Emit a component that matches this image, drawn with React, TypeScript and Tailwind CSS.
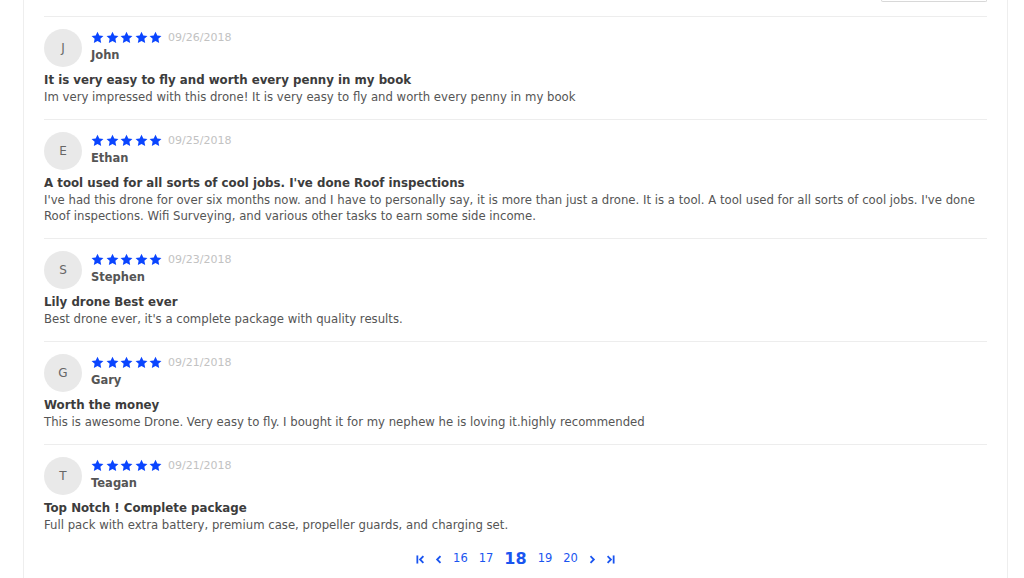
import React from "react";

type Review = {
  initial: string;
  name: string;
  date: string;
  title: string;
  body: string;
};

const REVIEWS: Review[] = [
  {
    initial: "J",
    name: "John",
    date: "09/26/2018",
    title: "It is very easy to fly and worth every penny in my book",
    body: "Im very impressed with this drone! It is very easy to fly and worth every penny in my book",
  },
  {
    initial: "E",
    name: "Ethan",
    date: "09/25/2018",
    title: "A tool used for all sorts of cool jobs. I've done Roof inspections",
    body: "I've had this drone for over six months now. and I have to personally say, it is more than just a drone. It is a tool. A tool used for all sorts of cool jobs. I've done Roof inspections. Wifi Surveying, and various other tasks to earn some side income.",
  },
  {
    initial: "S",
    name: "Stephen",
    date: "09/23/2018",
    title: "Lily drone Best ever",
    body: "Best drone ever, it's a complete package with quality results.",
  },
  {
    initial: "G",
    name: "Gary",
    date: "09/21/2018",
    title: "Worth the money",
    body: "This is awesome Drone. Very easy to fly. I bought it for my nephew he is loving it.highly recommended",
  },
  {
    initial: "T",
    name: "Teagan",
    date: "09/21/2018",
    title: "Top Notch ! Complete package",
    body: "Full pack with extra battery, premium case, propeller guards, and charging set.",
  },
];

function Star() {
  return (
    <svg width="13" height="13" viewBox="0 0 24 24" className="shrink-0">
      <path
        fill="#0a45ff"
        d="M12 1.2l3.3 7.1 7.7.9-5.7 5.3 1.5 7.6L12 18.3l-6.8 3.8 1.5-7.6L1 9.2l7.7-.9z"
      />
    </svg>
  );
}

function ReviewItem({ r }: { r: Review }) {
  return (
    <div className="border-t border-[#ededed] pt-3 pb-[14px]">
      <div className="flex items-start">
        <div className="flex h-[38px] w-[38px] shrink-0 items-center justify-center rounded-full bg-[#e9e9e9] text-[12px] text-[#666]">
          {r.initial}
        </div>
        <div className="ml-[9px] flex flex-col">
          <div className="flex h-[17px] items-center">
            <div className="flex gap-[1.5px]">
              <Star />
              <Star />
              <Star />
              <Star />
              <Star />
            </div>
            <span className="ml-[6px] text-[11px] leading-none text-[#c2c2c2]">{r.date}</span>
          </div>
          <div className="mt-[1px] text-[11.5px] font-bold leading-[16px] text-[#555]">{r.name}</div>
        </div>
      </div>
      <div className="mt-[4px] text-[11.8px] font-bold leading-[18px] text-[#3c3c3c]">{r.title}</div>
      <div className="text-[11.7px] leading-[16px] text-[#555]">{r.body}</div>
    </div>
  );
}

function Chev({ dir, bar }: { dir: "l" | "r"; bar?: boolean }) {
  const left = dir === "l";
  return (
    <svg width="9" height="9" viewBox="0 0 10 10" fill="none" stroke="#1a55f0" strokeWidth="2" strokeLinecap="square">
      {left ? <path d={bar ? "M7.5 2L4.5 5l3 3" : "M6.5 2L3.5 5l3 3"} /> : <path d={bar ? "M2.5 2l3 3-3 3" : "M3.5 2l3 3-3 3"} />}
      {bar && (left ? <path d="M1.5 1.5v7" /> : <path d="M8.5 1.5v7" />)}
    </svg>
  );
}

export default function App() {
  return (
    <div className="min-h-[578px] bg-white" style={{ fontFamily: "'DejaVu Sans', 'Open Sans', sans-serif" }}>
      <div className="ml-[23px] mr-[16px] min-h-[578px] border-x border-[#eeeeee] px-5">
        <div className="flex h-[16px] justify-end">
          <div className="h-[2px] w-[106px] rounded-b-[2px] border-x border-b border-[#d8d8d8]" />
        </div>
        {REVIEWS.map((r) => (
          <ReviewItem key={r.name} r={r} />
        ))}
        <div className="flex items-center justify-center gap-[9px] text-[11.5px] text-[#1a55f0]">
          <Chev dir="l" bar />
          <Chev dir="l" />
          <span className="px-[1px]">16</span>
          <span className="px-[1px]">17</span>
          <span className="px-[1px] text-[16px] font-bold">18</span>
          <span className="px-[1px]">19</span>
          <span className="px-[1px]">20</span>
          <Chev dir="r" />
          <Chev dir="r" bar />
        </div>
      </div>
    </div>
  );
}
